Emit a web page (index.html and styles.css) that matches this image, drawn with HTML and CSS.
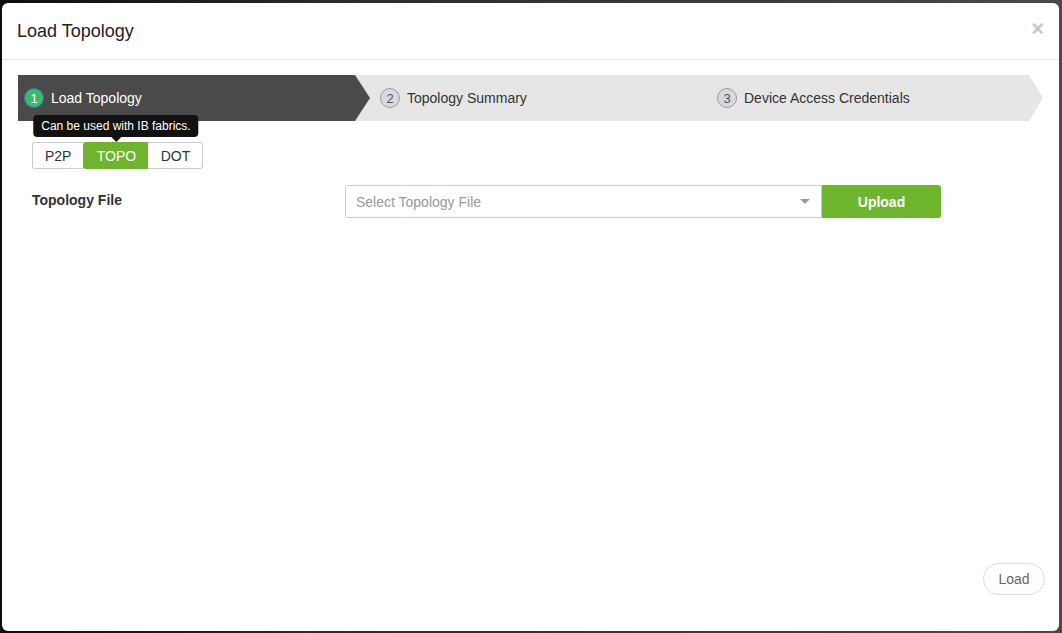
FILE: index.html
```html
<!DOCTYPE html>
<html lang="en">
<head>
    <meta charset="UTF-8">
    <meta name="viewport" content="width=device-width, initial-scale=1.0">
    <title>Load Topology</title>
    <link rel="stylesheet" href="styles.css">
</head>
<body>

    <div class="modal">
        <div class="modal-header">
            <h2 class="modal-title">Load Topology</h2>
            <span class="close">&times;</span>
        </div>

        <div class="modal-body">
            <!-- Pasos del asistente -->
            <div class="wizard">
                <div class="step active"><span class="num">1</span>Load Topology</div>
                <div class="step middle"><span class="num">2</span>Topology Summary</div>
                <div class="step last"><span class="num">3</span>Device Access Credentials</div>
            </div>

            <div class="format-group">
                <button class="fmt">P2P</button>
                <div class="fmt-wrap">
                    <button class="fmt selected">TOPO</button>
                    <div class="tip">Can be used with IB fabrics.</div>
                </div>
                <button class="fmt">DOT</button>
            </div>

            <div class="form-row">
                <label class="form-label">Topology File</label>
                <div class="select">
                    <span class="placeholder">Select Topology File</span>
                    <span class="caret"></span>
                </div>
                <button class="upload">Upload</button>
            </div>
        </div>

        <div class="modal-footer">
            <button class="load">Load</button>
        </div>
    </div>

</body>
</html>
```

FILE: styles.css
```css
body {
    margin: 0;
    height: 633px;
    overflow: hidden;
    background: linear-gradient(to right, #0d0d0d 0%, #2a2a2a 30%, #4a4a4a 100%);
    font-family: "Liberation Sans", Arial, sans-serif;
    color: #333;
}
.modal {
    margin: 3px 0 0 2px;
    width: 1057px;
    height: 628px;
    background: #fff;
    border-radius: 6px;
    display: flex;
    flex-direction: column;
}
.modal-header {
    height: 56px;
    border-bottom: 1px solid #e5e5e5;
    display: flex;
    align-items: center;
    justify-content: space-between;
    padding: 0 15px;
}
.modal-title {
    margin: 0;
    font-size: 18px;
    font-weight: normal;
    color: #222;
}
.close {
    font-size: 22px;
    font-weight: bold;
    color: #c8c8c8;
    line-height: 1;
    margin-top: -4px;
}
.modal-body {
    flex: 1;
    padding: 15px 16px 0 16px;
}
.wizard {
    display: flex;
    height: 46px;
    font-size: 14px;
}
.step {
    display: flex;
    align-items: center;
    background: #e6e6e6;
    color: #333;
}
.step.active {
    position: relative;
    z-index: 1;
    width: 346px;
    padding-left: 6px;
    background: #4a4a4a;
    color: #fff;
    clip-path: polygon(0 0, calc(100% - 15px) 0, 100% 50%, calc(100% - 15px) 100%, 0 100%);
}
.step.middle {
    width: 312px;
    margin-left: -15px;
    padding-left: 25px;
}
.step.last {
    flex: 1;
    padding-left: 25px;
    clip-path: polygon(0 0, calc(100% - 14px) 0, 100% 50%, calc(100% - 14px) 100%, 0 100%);
}
.num {
    width: 18px;
    height: 18px;
    border-radius: 50%;
    border: 1px solid #9a9aa0;
    background: #d8d8de;
    color: #555;
    display: inline-flex;
    align-items: center;
    justify-content: center;
    font-size: 13px;
    margin-right: 7px;
}
.step.active .num {
    background: #3db86d;
    border-color: #2d7fa6;
    color: #fff;
}
.format-group {
    display: flex;
    margin: 21px 0 0 14px;
}
.fmt-wrap {
    position: relative;
    z-index: 2;
}
.fmt {
    height: 27px;
    padding: 0 12px;
    border: 1px solid #ccc;
    background: #fff;
    font-family: inherit;
    font-size: 14px;
    color: #333;
}
.fmt:first-child {
    border-radius: 3px 0 0 3px;
    border-right: 0;
}
.fmt:last-child {
    width: 55px;
    border-radius: 0 3px 3px 0;
    border-left: 0;
}
.fmt.selected {
    width: 65px;
    background: #6cb52d;
    border-color: #6cb52d;
    color: #fff;
}
.tip {
    position: absolute;
    bottom: calc(100% + 5px);
    left: 50%;
    transform: translateX(-50%);
    white-space: nowrap;
    background: #111;
    color: #fff;
    font-size: 12px;
    line-height: 14px;
    padding: 4px 8px;
    border-radius: 4px;
}
.tip::after {
    content: "";
    position: absolute;
    top: 100%;
    left: 50%;
    margin-left: -5px;
    border: 5px solid transparent;
    border-top-color: #111;
    border-bottom: 0;
}
.form-row {
    display: flex;
    align-items: center;
    margin: 16px 0 0 14px;
}
.form-label {
    width: 313px;
    font-size: 14px;
    font-weight: bold;
    margin-top: -4px;
}
.select {
    width: 477px;
    height: 33px;
    border: 1px solid #ccc;
    border-radius: 3px 0 0 3px;
    display: flex;
    align-items: center;
    justify-content: space-between;
    padding: 0 10px;
    box-sizing: border-box;
}
.placeholder {
    color: #999;
    font-size: 14px;
}
.caret {
    border: 5px solid transparent;
    border-top: 5px solid #999;
    border-bottom: 0;
    margin-right: 1px;
}
.upload {
    width: 119px;
    height: 33px;
    border: 0;
    border-radius: 0 3px 3px 0;
    background: #6cb52d;
    color: #fff;
    font-family: inherit;
    font-size: 14px;
    font-weight: bold;
}
.modal-footer {
    display: flex;
    justify-content: flex-end;
    padding: 0 14px 36px 0;
}
.load {
    height: 32px;
    width: 62px;
    border: 1px solid #ddd;
    border-radius: 16px;
    background: #fff;
    color: #666;
    font-family: inherit;
    font-size: 14px;
}
```
